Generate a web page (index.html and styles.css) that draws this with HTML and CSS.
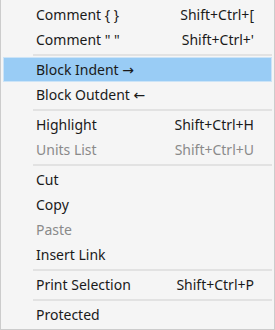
FILE: index.html
```html
<!DOCTYPE html>
<html>
<head>
<meta charset="utf-8">
<link rel="stylesheet" href="styles.css">
</head>
<body>
<div class="menu">
  <div class="item"><span class="label">Comment { }</span><span class="key">Shift+Ctrl+[</span></div>
  <div class="item"><span class="label">Comment " "</span><span class="key">Shift+Ctrl+'</span></div>
  <div class="sep"></div>
  <div class="item active"><span class="label">Block Indent <span class="arrow">→</span></span></div>
  <div class="item"><span class="label">Block Outdent <span class="arrow">←</span></span></div>
  <div class="sep"></div>
  <div class="item"><span class="label">Highlight</span><span class="key">Shift+Ctrl+H</span></div>
  <div class="item disabled"><span class="label">Units List</span><span class="key">Shift+Ctrl+U</span></div>
  <div class="sep"></div>
  <div class="item"><span class="label">Cut</span></div>
  <div class="item"><span class="label">Copy</span></div>
  <div class="item disabled"><span class="label">Paste</span></div>
  <div class="item"><span class="label">Insert Link</span></div>
  <div class="sep"></div>
  <div class="item"><span class="label">Print Selection</span><span class="key">Shift+Ctrl+P</span></div>
  <div class="sep"></div>
  <div class="item"><span class="label">Protected</span></div>
</div>
</body>
</html>
```

FILE: styles.css
```css
html, body {
  margin: 0;
  padding: 0;
  background: #f5f5f5;
}
.menu {
  width: 275px;
  height: 330px;
  box-sizing: border-box;
  border: 1px solid #cccccc;
  border-top: none;
  background: #f5f5f5;
  padding: 2px 2px 0 2px;
  font-family: "Noto Sans", "Open Sans", sans-serif;
  font-size: 14px;
  color: #1a1a1a;
  display: flex;
  flex-direction: column;
}
.item {
  flex: 0 0 25px;
  height: 25px;
  display: flex;
  align-items: center;
  justify-content: space-between;
  padding: 0 17px 0 32px;
  box-sizing: border-box;
  border: 1px solid transparent;
}
.item.active {
  background: #99ccf5;
  border-color: #cce4f7;
}
.item.disabled {
  color: #8a8a8a;
}
.arrow {
  font-family: "DejaVu Sans", sans-serif;
  font-size: 14px;
}
.sep {
  flex: 0 0 2px;
  height: 2px;
  margin: 2px 0 1px 30px;
  background: #e2e2e2;
}
```
